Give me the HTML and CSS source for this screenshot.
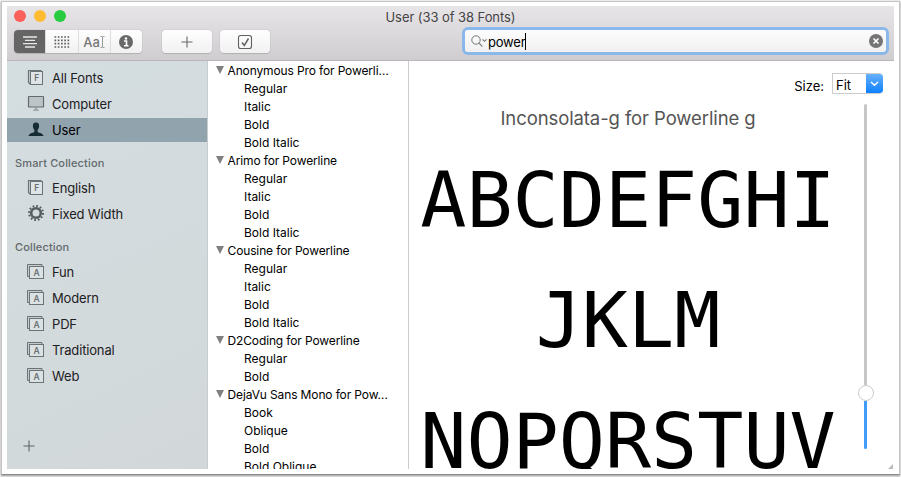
FILE: index.html
```html
<!DOCTYPE html>
<html lang="en">
<head>
<meta charset="utf-8">
<title>Font Book</title>
<link rel="stylesheet" href="styles.css">
</head>
<body>
<svg class="defs" width="0" height="0">
  <symbol id="book" viewBox="0 0 18 18"><path d="M3.500 15.500L1.500 13.500V1.500H13.500l2 1.500" fill="#c9d0d3" stroke="#6b7376" stroke-width="1.200"/><rect x="3.500" y="2.500" width="12" height="13" fill="#dfe5e7" stroke="#6b7376"/><text x="9.600" y="12.300" text-anchor="middle" class="glyph">F</text></symbol>
  <symbol id="stack" viewBox="0 0 18 18"><path d="M2.500 13.500h-2v-12h14.500v2" fill="#c5cccf" stroke="#6b7376"/><rect x="2.500" y="3.500" width="14" height="12" fill="#dce2e4" stroke="#6b7376"/><text x="9.500" y="12.800" text-anchor="middle" class="glyph">A</text></symbol>
</svg>
<div class="window">
  <header class="toolbar">
    <div class="lights"><i class="red"></i><i class="yellow"></i><i class="green"></i></div>
    <h1 class="title">User (33 of 38 Fonts)</h1>
    <div class="tools">
      <div class="segments">
        <div class="seg on"><svg width="16" height="12" viewBox="0 0 16 12"><path d="M1 1h14M3 4.300h10M1 7.700h14M3 11h10" stroke="#e8e8e8" stroke-width="1.300"/></svg></div>
        <div class="seg"><svg width="16" height="12" viewBox="0 0 16 12"><path d="M.5 1h15M.5 4.300h15M.5 7.700h15M.5 11h15" stroke="#606060" stroke-width="1.700" stroke-dasharray="1.700 1.550"/></svg></div>
        <div class="seg aa">Aa<svg width="5" height="12" viewBox="0 0 5 12"><path d="M.5 .5h1.500l.5.7.5-.7h1.500M2.500 1v10M.5 11.500h1.500l.5-.7.5.7h1.500" fill="none" stroke="#999"/></svg></div>
        <div class="seg"><svg width="14" height="14" viewBox="0 0 14 14"><circle cx="7" cy="7" r="7" fill="#686868"/><circle cx="7" cy="3.500" r="1.300" fill="#fff"/><path d="M5 6h2.500v4.500M5 10.700h4.500" fill="none" stroke="#fff" stroke-width="1.600"/></svg></div>
      </div>
      <div class="button"><svg width="12" height="12" viewBox="0 0 12 12"><path d="M.5 6h11M6 .5v11" stroke="#666" stroke-width="1.100"/></svg></div>
      <div class="button check"><svg width="16" height="16" viewBox="0 0 16 16"><rect x="1.500" y="1.500" width="13" height="13" rx="2.300" fill="none" stroke="#606060" stroke-width="1.100"/><path d="M5 8.500l2.300 3L11.500 4.500" fill="none" stroke="#606060" stroke-width="1.500"/></svg></div>
      <div class="search">
        <svg width="18" height="14" viewBox="0 0 18 14"><circle cx="6" cy="6" r="4.200" fill="none" stroke="#777"/><path d="M9.100 9.100l3.300 3.600M12.500 5.300l2 2 2-2" fill="none" stroke="#777" stroke-width="1.100"/></svg>
        <span class="query">power</span><span class="caret"></span>
        <svg class="clear" width="14" height="14" viewBox="0 0 14 14"><circle cx="7" cy="7" r="7" fill="#757575"/><path d="M4.500 4.500l5 5M9.500 4.500l-5 5" stroke="#fff" stroke-width="1.600"/></svg>
      </div>
    </div>
  </header>
  <div class="body">
    <nav class="sidebar">
      <div class="item"><svg class="icon"><use href="#book"/></svg>All Fonts</div>
      <div class="item"><svg class="icon" viewBox="0 0 18 18"><rect x="1.500" y="1.500" width="15" height="10.500" rx=".6" fill="#bdc4c7" stroke="#626a6d" stroke-width="1.200"/><path d="M7.500 13h3v2h-3z" fill="#a1a9ac"/><path d="M6 15.300h6" stroke="#929b9e"/></svg>Computer</div>
      <div class="item selected"><svg class="icon" viewBox="0 0 18 18"><path d="M9 1.500C6.700 1.500 5.700 3 5.900 5.200c.1 1.600.6 2.800 1.500 3.700v1.800C7.200 11.800 2 11.700 1.500 15h15C16 11.700 10.800 11.800 10.600 10.700V8.900c.9-.9 1.400-2.100 1.500-3.700C12.300 3 11.300 1.500 9 1.500z" fill="#142c34"/></svg>User</div>
      <h2>Smart Collection</h2>
      <div class="item"><svg class="icon"><use href="#book"/></svg>English</div>
      <div class="item"><svg class="icon" viewBox="0 0 18 18"><circle cx="9" cy="8" r="4.800" fill="none" stroke="#555d61" stroke-width="2.600"/><circle cx="9" cy="8" r="7" fill="none" stroke="#555d61" stroke-width="2" stroke-dasharray="1.700 1.965"/></svg>Fixed Width</div>
      <h2>Collection</h2>
      <div class="item"><svg class="icon"><use href="#stack"/></svg>Fun</div>
      <div class="item"><svg class="icon"><use href="#stack"/></svg>Modern</div>
      <div class="item"><svg class="icon"><use href="#stack"/></svg>PDF</div>
      <div class="item"><svg class="icon"><use href="#stack"/></svg>Traditional</div>
      <div class="item"><svg class="icon"><use href="#stack"/></svg>Web</div>
      <svg class="add" width="12" height="12" viewBox="0 0 12 12"><path d="M.5 6h11M6 .5v11" stroke="#5d6568" stroke-width="1.100"/></svg>
    </nav>
    <section class="fonts">
      <h3>Anonymous Pro for Powerli…</h3><p>Regular</p><p>Italic</p><p>Bold</p><p>Bold Italic</p>
      <h3>Arimo for Powerline</h3><p>Regular</p><p>Italic</p><p>Bold</p><p>Bold Italic</p>
      <h3>Cousine for Powerline</h3><p>Regular</p><p>Italic</p><p>Bold</p><p>Bold Italic</p>
      <h3>D2Coding for Powerline</h3><p>Regular</p><p>Bold</p>
      <h3>DejaVu Sans Mono for Pow…</h3><p>Book</p><p>Oblique</p><p>Bold</p><p>Bold Oblique</p>
    </section>
    <main class="preview">
      <div class="sample">
        <div class="name">Inconsolata-g for Powerline g</div>
        <div class="glyphs">ABCDEFGHI<br>JKLM<br>NOPQRSTUV</div>
      </div>
      <div class="controls">
        <div class="size"><span>Size:</span><div class="combo"><span>Fit</span><b><svg width="9" height="6" viewBox="0 0 9 6"><path d="M1 1l3.500 3.300L8 1" fill="none" stroke="#fff" stroke-width="1.500"/></svg></b></div></div>
        <div class="slider"><i class="track"></i><i class="knob"></i><i class="fill"></i></div>
      </div>
      <svg class="grip" width="5" height="5" viewBox="0 0 5 5"><path d="M5 0v5H0z" fill="#bbb"/></svg>
    </main>
  </div>
</div>
</body>
</html>
```
FILE: styles.css
```css
* { box-sizing: border-box; }
body { margin: 0; width: 901px; height: 477px; overflow: hidden; padding: 1px 1px 2px 1px; background: #f1f1f1; font-family: Inter, sans-serif; font-size: 12px; color: #000; }
h1, h2, h3, p { margin: 0; font-weight: 400; }
.defs { display: none; }
.glyph { font: 600 8.5px Inter, sans-serif; fill: #6b7376; }
.window { height: 474px; padding: 4px 5px 5px; border: 1px solid #c4c4c4; border-bottom: 1px solid #8c8c8c; background: #fff; box-shadow: 0 1px 2px #999; display: flex; flex-direction: column; }
.toolbar { height: 55px; flex: none; background: linear-gradient(#e8e5e8, #d0cdd0); border-bottom: 1px solid #b9b7b9; display: grid; grid-template-rows: 22px 32px; grid-template-columns: 1fr auto 1fr; }
.lights { display: flex; gap: 8px; padding: 4px 0 0 7px; }
.lights i { width: 12px; height: 12px; border-radius: 50%; }
.red { background: #fc605b; } .yellow { background: #fdbc32; } .green { background: #29cc41; }
.title { font-size: 13px; line-height: 22px; letter-spacing: -.07px; color: #444; }
.tools { grid-column: 1 / 4; display: flex; align-items: flex-start; padding: 2px 8px 0 7px; }
.segments, .button { height: 23px; border-radius: 4px; background: linear-gradient(#fefefe, #f2f1f2); box-shadow: 0 0 1px #999, 0 1px 1px #b5b3b5; display: flex; overflow: hidden; }
.segments { width: 128px; }
.seg { flex: 1; display: flex; align-items: center; justify-content: center; border-left: 1px solid #ddd; }
.seg.on { background: #656565; border: 0; }
.aa { font-size: 13px; font-weight: 500; color: #777; }
.button { width: 50px; margin-left: 20px; align-items: center; justify-content: center; }
.button.check { margin-left: 8px; }
.search { width: 421px; height: 22px; margin-left: auto; border-radius: 3px; background: linear-gradient(#fcfcfc, #f1f1f1); box-shadow: 0 0 0 3px #8ab8ea; display: flex; align-items: center; padding-left: 5px; }
.query { font-size: 13px; letter-spacing: -.2px; line-height: 20px; padding-top: 1px; }
.caret { width: 1px; height: 17px; background: #000; }
.clear { margin: 0 3px 0 auto; }
.body { flex: 1; min-height: 0; display: flex; overflow: hidden; }
.sidebar { width: 201px; padding-top: 5px; background: linear-gradient(155deg, #d4dde0, #d2d8da); border-right: 1px solid #c6cccf; display: flex; flex-direction: column; color: #1d2022; }
.item { height: 24px; margin-bottom: 2px; padding-left: 20px; display: flex; align-items: center; gap: 7px; font-size: 13px; letter-spacing: -.16px; }
.selected { background: #91a4ad; color: #000; }
.icon { width: 18px; height: 18px; flex: none; }
.sidebar h2 { height: 26px; margin-top: 6px; padding-left: 8px; font-size: 11px; font-weight: 500; line-height: 26px; letter-spacing: .15px; color: #63696c; }
.add { margin: auto 0 17px 16px; }
.fonts { width: 201px; padding-top: 1px; border-right: 1px solid #ccc; overflow: hidden; white-space: nowrap; }
.fonts h3, .fonts p { height: 18px; font-size: 12px; line-height: 18px; }
.fonts h3 { display: flex; align-items: center; gap: 4px; padding-left: 7.5px; letter-spacing: -.13px; }
.fonts h3::before { content: ""; border: 4.5px solid transparent; border-top: 8px solid #808080; border-bottom: 0; margin-top: -2px; }
.fonts p { padding-left: 36px; }
.preview { flex: 1; display: flex; position: relative; }
.sample { width: 438px; text-align: center; padding-top: 44px; }
.name { font-size: 18.500px; line-height: 26px; letter-spacing: -.1px; color: #555; }
.glyphs { font: 76.7px/120.3px "DejaVu Sans Mono", monospace; margin-top: 10px; }
.controls { flex: 1; display: flex; flex-direction: column; align-items: flex-end; margin-left: -60px; padding: 12px 11px 0 0; }
.size { display: flex; align-items: center; gap: 8px; font-size: 13px; line-height: 20px; }
.size > span { padding-top: 3px; }
.combo { width: 51px; height: 21px; display: flex; border: 1px solid #ccc; border-right: 0; border-radius: 0 4px 4px 0; overflow: hidden; line-height: 22px; padding-left: 3px; margin-bottom: 2px; }
.combo b { width: 17px; margin: -1px 0 -1px auto; background: linear-gradient(#6cb3fa, #087eff); display: flex; align-items: center; justify-content: center; }
.slider { width: 17px; height: 345px; margin: 8px 9px 0 0; display: flex; flex-direction: column; align-items: center; }
.track { width: 3px; height: 281px; background: #c7c7c7; border-radius: 2px 2px 0 0; }
.knob { width: 16px; height: 16px; border: 1px solid #ccc; border-radius: 50%; background: #fff; }
.fill { width: 3px; flex: 1; background: #409cff; border-radius: 0 0 2px 2px; }
.grip { position: absolute; right: 1px; bottom: 0; }
```
